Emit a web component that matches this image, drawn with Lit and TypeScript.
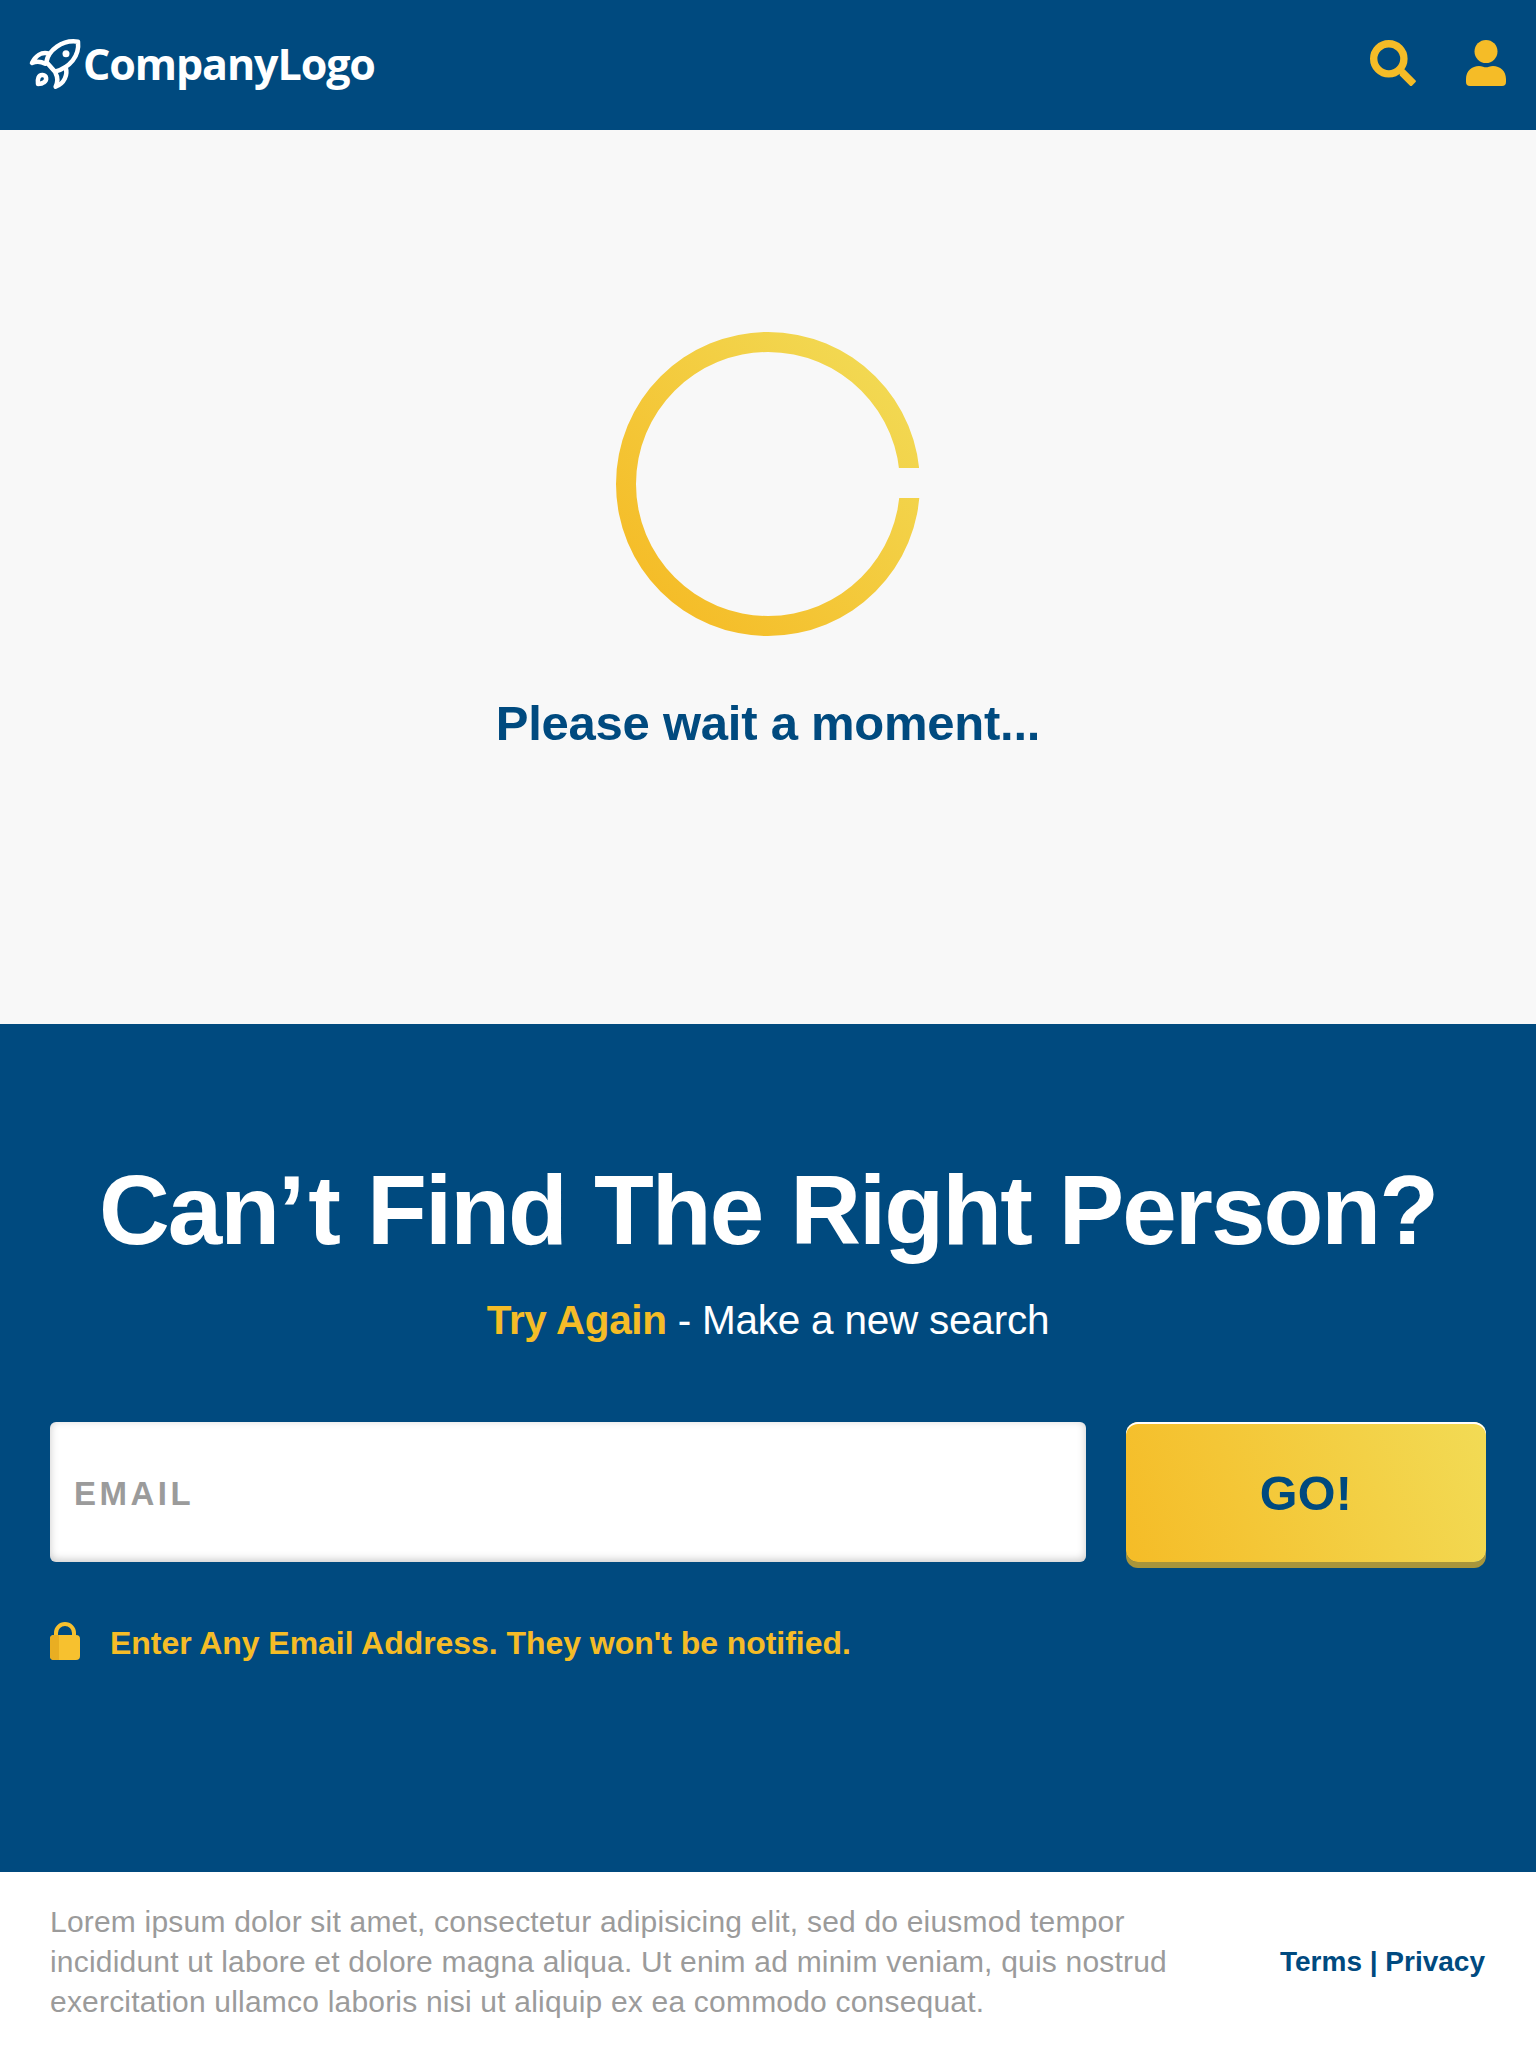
import { LitElement, html, css } from "lit";
import { customElement } from "lit/decorators.js";

@customElement("app-header")
class AppHeader extends LitElement {
  static styles = css`
    :host {
      display: flex;
      align-items: flex-start;
      justify-content: space-between;
      box-sizing: border-box;
      height: 130px;
      padding: 36px 30px 0 26px;
      background: #004a7f;
    }
    .brand {
      display: flex;
      align-items: flex-start;
    }
    .rocket {
      width: 60px;
      height: 58px;
      margin-right: -3px;
    }
    .name {
      margin-top: -2px;
      color: #fff;
      font: 700 43px/60px "Open Sans", sans-serif;
      font-stretch: 90%;
      letter-spacing: -1.1px;
      white-space: nowrap;
    }
    .actions {
      display: flex;
      gap: 50px;
      padding-top: 4px;
    }
    .icon {
      display: block;
      height: 46px;
    }
  `;
  render() {
    return html`
      <div class="brand">
        <svg class="rocket" viewBox="0 0 180 174" fill="none" stroke="#fff" stroke-width="13.5" stroke-linejoin="round" stroke-linecap="round">
          <path d="M61 78C67 43 108 10 156 17C161 61 131 94 87 107Z" />
          <path d="M69 53C46 46 28 60 18 81Q37 72 58 83" />
          <path d="M119 94C126 116 115 143 89 152Q99 130 89 112" />
          <path d="M36 144C34 130 37 116 50 117C62 118 64 132 54 139Q48 144 36 144Z" />
          <circle cx="120" cy="53" r="10.5" fill="#fff" stroke="none" />
        </svg>
        <div class="name">CompanyLogo</div>
      </div>
      <div class="actions">
        <svg class="icon" width="46" height="46" viewBox="0 0 46 46" fill="none">
          <circle cx="18.8" cy="18.8" r="15.1" stroke="#f5bc27" stroke-width="7.4" />
          <path d="M34 30.3L44.9 41.3L41 45.2L30.7 35V31.5Z" fill="#f5bc27" stroke="#f5bc27" stroke-width="2" stroke-linejoin="round" />
        </svg>
        <svg class="icon" width="40" height="46" viewBox="0 0 40 46" fill="#f5bc27">
          <circle cx="20" cy="11.5" r="11.5" />
          <path d="M0 40V39C0 31 6 26 13 26Q15 26 17 26.8Q20 27.8 23 26.8Q25 26 27 26C34 26 40 31 40 39V42Q40 46 36 46H4Q0 46 0 42Z" />
        </svg>
      </div>
    `;
  }
}

@customElement("loading-panel")
class LoadingPanel extends LitElement {
  static styles = css`
    :host {
      display: flex;
      flex-direction: column;
      align-items: center;
      box-sizing: border-box;
      height: 894px;
      padding-top: 202px;
      background: #f8f8f8;
    }
    .ring {
      display: block;
      width: 304px;
      height: 304px;
    }
    .message {
      margin-top: 57px;
      color: #004a7f;
      font: 700 49px/60px "Liberation Sans", Arial, sans-serif;
      letter-spacing: -0.25px;
    }
  `;
  render() {
    return html`
      <svg class="ring" viewBox="0 0 304 304">
        <defs>
          <linearGradient id="gold" x1="0.12" y1="0.88" x2="0.88" y2="0.12">
            <stop offset="0" stop-color="#f5bc27" />
            <stop offset="1" stop-color="#f2d953" />
          </linearGradient>
          <clipPath id="gap">
            <path d="M0 0H304V136H152V166H304V304H0Z" />
          </clipPath>
        </defs>
        <path
          clip-path="url(#gap)"
          fill="url(#gold)"
          fill-rule="evenodd"
          d="M0 152A152 152 0 1 1 304 152A152 152 0 1 1 0 152ZM20 152A132 132 0 1 0 284 152A132 132 0 1 0 20 152Z"
        />
      </svg>
      <div class="message">Please wait a moment...</div>
    `;
  }
}

@customElement("search-panel")
class SearchPanel extends LitElement {
  static styles = css`
    :host {
      display: block;
      box-sizing: border-box;
      height: 848px;
      padding: 126px 50px 0;
      background: #004a7f;
      font-family: "Liberation Sans", Arial, sans-serif;
    }
    .title {
      margin: 0;
      color: #fff;
      font-size: 98px;
      font-weight: 700;
      line-height: 120px;
      letter-spacing: -1.98px;
      word-spacing: 2.8px;
      text-align: center;
      white-space: nowrap;
    }
    .apostrophe {
      letter-spacing: 3px;
    }
    .sub {
      margin: 25px 0 0;
      color: #fff;
      font-size: 40.5px;
      line-height: 50px;
      letter-spacing: -0.23px;
      text-align: center;
    }
    .again {
      color: #f5bc27;
      font-weight: 700;
      letter-spacing: -0.35px;
    }
    .form {
      display: grid;
      grid-template-columns: 1fr 360px;
      grid-template-rows: 140px;
      gap: 40px;
      height: 140px;
      margin-top: 77px;
    }
    .field {
      box-sizing: border-box;
      padding: 4px 24px 0;
      border-radius: 6px;
      background: #fff;
      box-shadow: inset 0 -2px 8px rgba(0, 0, 0, 0.22);
      color: #9b9b9b;
      font-size: 33px;
      font-weight: 700;
      line-height: 136px;
      letter-spacing: 3.5px;
    }
    .go {
      border: 0;
      padding: 2px 0 0;
      border-radius: 12px;
      background: linear-gradient(70deg, #f5bc27, #f2db55);
      box-shadow: inset 0 2px 0 #fff, 0 6px 0 #a8953b;
      color: #004a7f;
      font: 700 48.5px/138px "Liberation Sans", Arial, sans-serif;
      letter-spacing: 0.3px;
    }
    .note {
      display: flex;
      align-items: flex-start;
      gap: 30px;
      margin-top: 60px;
      color: #f5bc27;
      font-size: 32px;
      font-weight: 700;
      line-height: 42px;
      letter-spacing: -0.05px;
    }
    .lock {
      display: block;
      width: 30px;
      height: 38px;
    }
  `;
  render() {
    return html`
      <h1 class="title">Can<span class="apostrophe">’</span>t Find The Right Person?</h1>
      <p class="sub"><span class="again">Try Again</span> - Make a new search</p>
      <div class="form">
        <div class="field">EMAIL</div>
        <button class="go">GO!</button>
      </div>
      <div class="note">
        <svg class="lock" viewBox="0 0 30 38">
          <path d="M6 14V11A9 9 0 0 1 24 11V14" fill="none" stroke="#f7c12f" stroke-width="4" />
          <rect y="13" width="30" height="25" rx="4" fill="#f7c12f" />
          <path d="M9 13H4Q0 13 0 17V34Q0 38 4 38H9Z" fill="#e9ae22" />
        </svg>
        <span>Enter Any Email Address. They won't be notified.</span>
      </div>
    `;
  }
}

@customElement("app-footer")
class AppFooter extends LitElement {
  static styles = css`
    :host {
      display: flex;
      align-items: center;
      justify-content: space-between;
      box-sizing: border-box;
      height: 176px;
      padding: 4px 51px 0 50px;
      background: #fff;
      font: 400 30px/40px "Liberation Sans", Arial, sans-serif;
    }
    .legal {
      width: 1130px;
      color: #9b9b9b;
      letter-spacing: 0.2px;
    }
    .links {
      color: #004a7f;
      font-size: 28px;
      font-weight: 700;
      white-space: nowrap;
    }
  `;
  render() {
    return html`
      <div class="legal">
        Lorem ipsum dolor sit amet, consectetur adipisicing elit, sed do eiusmod tempor incididunt ut labore et dolore
        magna aliqua. Ut enim ad minim veniam, quis nostrud exercitation ullamco laboris nisi ut aliquip ex ea commodo
        consequat.
      </div>
      <div class="links">Terms | Privacy</div>
    `;
  }
}

@customElement("app-root")
class AppRoot extends LitElement {
  static styles = css`
    :host {
      display: block;
      width: 1536px;
      height: 2048px;
      overflow: hidden;
    }
  `;
  render() {
    return html`
      <app-header></app-header>
      <loading-panel></loading-panel>
      <search-panel></search-panel>
      <app-footer></app-footer>
    `;
  }
}
